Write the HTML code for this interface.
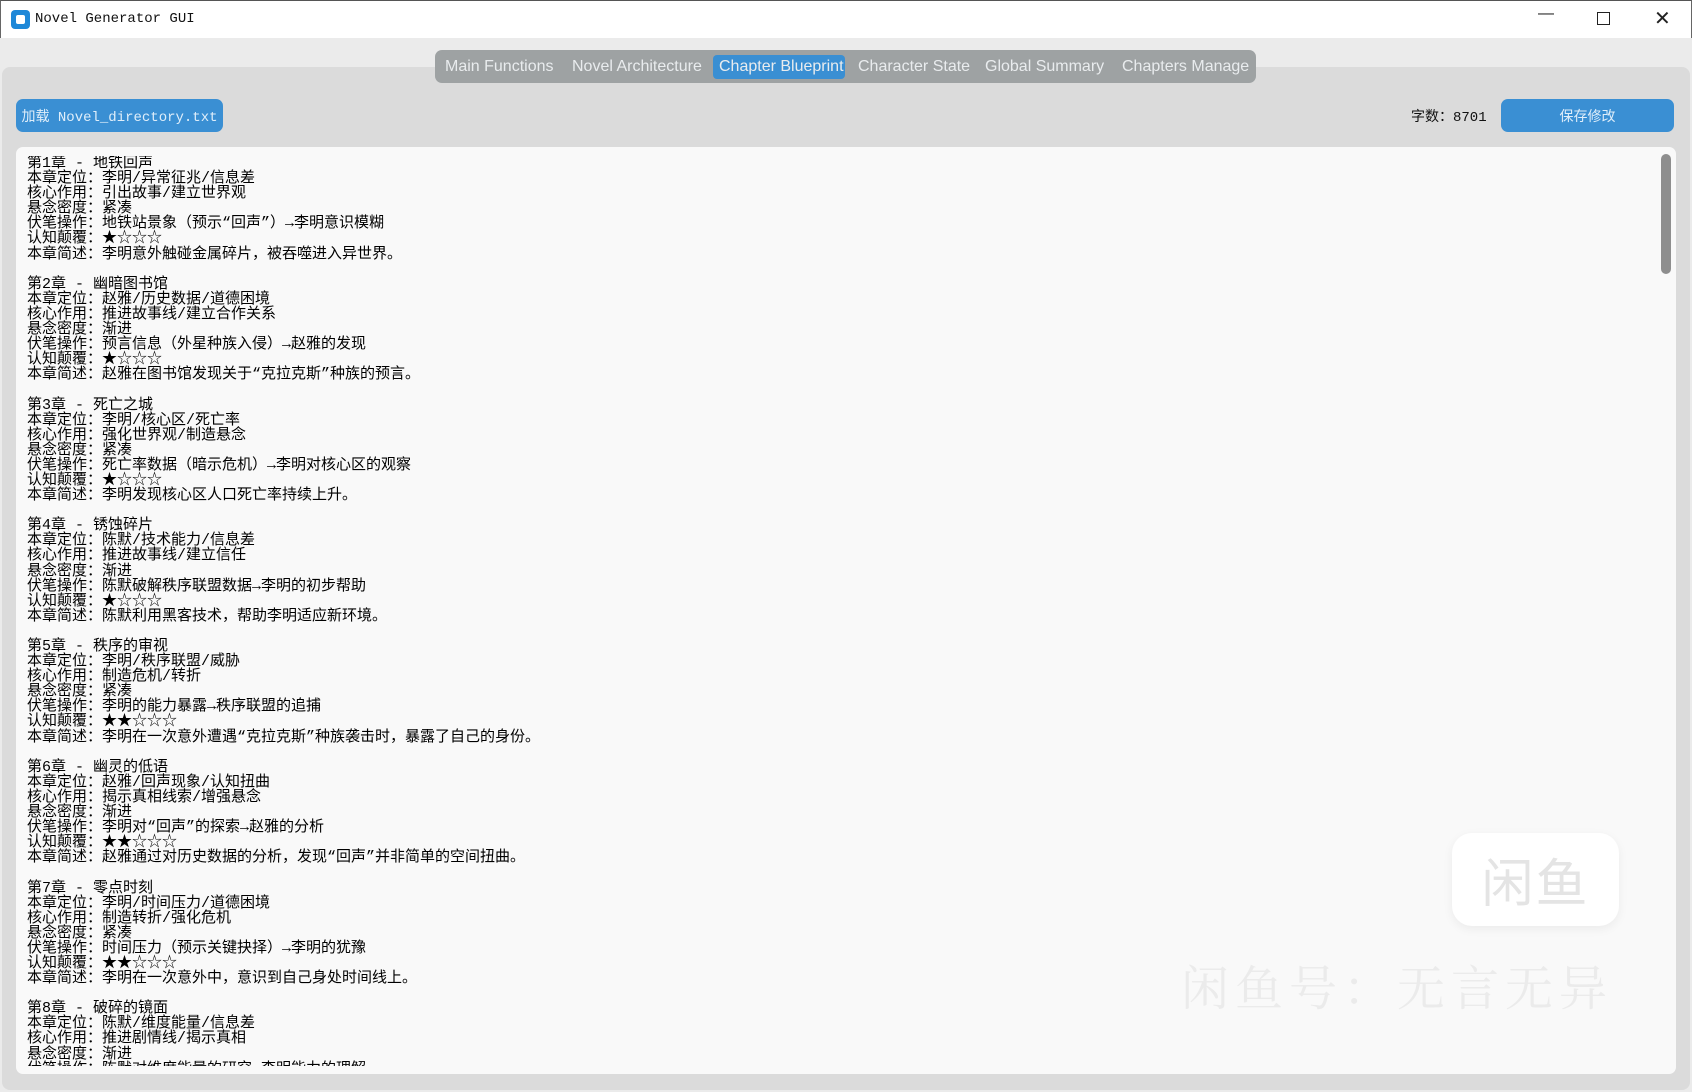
<!DOCTYPE html>
<html><head><meta charset="utf-8"><style>
*{margin:0;padding:0;box-sizing:border-box}
body{width:1692px;height:1092px;background:#ebebeb;position:relative;overflow:hidden;font-family:"Liberation Sans","Noto Sans CJK SC",sans-serif}
.title{position:absolute;left:0;top:0;width:1692px;height:38px;background:#fff;border-top:1px solid #555;border-left:1px solid #666;border-right:1px solid #666}
.title .ic{position:absolute;left:10px;top:9px;width:19px;height:19px;border-radius:4px;background:#1e88d8}
.title .ic::after{content:"";position:absolute;left:5px;top:5px;width:9px;height:9px;background:#fff;border-radius:2px}
.title .t{position:absolute;left:34px;top:10px;font:14px "Liberation Mono",monospace;color:#111}
.ctl{position:absolute;top:8px;font-size:16px;color:#222}
.panel{position:absolute;left:2px;top:67px;width:1688px;height:1023px;background:#dbdbdb;border-radius:8px}
.tabs{position:absolute;left:435px;top:50px;width:821px;height:33px;background:#9ea2a3;border-radius:7px}
.tab{position:absolute;font-size:16px;color:#e9ecee;white-space:nowrap}
.sel{position:absolute;left:713px;top:55px;width:132px;height:24px;background:#3a8fd3;border-radius:4px}
.btn{position:absolute;background:#3a8fd3;border-radius:7px;color:#dfeefa;font:14px "Liberation Mono","Noto Sans CJK SC",monospace;display:flex;align-items:center;justify-content:center}
.cnt{position:absolute;left:1411px;top:106px;font:14px "Liberation Mono","Noto Sans CJK SC",monospace;color:#111}
.box{position:absolute;left:16px;top:147px;width:1660px;height:927px;background:#f9f9f9;border-radius:7px;overflow:hidden}
.txt{position:absolute;left:11px;top:9px;width:1500px;height:910px;overflow:hidden;font:15px/15.1px "Liberation Mono","Noto Sans CJK SC",monospace;color:#000;white-space:pre}
.sb{position:absolute;left:1661px;top:154px;width:10px;height:120px;background:#8e8e8e;border-radius:5px}
.logo{position:absolute;left:1452px;top:833px;width:167px;height:93px;background:#fff;border-radius:20px;box-shadow:0 3px 10px rgba(0,0,0,0.06);font:52px "Noto Sans CJK SC",sans-serif;color:#e4e4e4;display:flex;align-items:center;justify-content:center;letter-spacing:2px}
.wm{position:absolute;left:1181px;top:950px;font:48px "Noto Serif CJK SC",serif;color:#ebebeb;white-space:nowrap;letter-spacing:6px}
</style></head><body>
<div class="title"><div class="ic"></div><div class="t">Novel Generator GUI</div>
<div class="ctl" style="left:1537px;top:4px">&#8212;</div>
<div class="ctl" style="left:1596px;top:11px;width:13px;height:13px;border:1.5px solid #222"></div>
<div class="ctl" style="left:1653px;top:5px;font-size:20px">&#10005;</div></div>
<div class="panel"></div>
<div class="tabs"></div>
<div class="sel"></div>
<div class="tab" style="left:445px;top:58px">Main Functions</div>
<div class="tab" style="left:572px;top:58px">Novel Architecture</div>
<div class="tab" style="left:719px;top:58px">Chapter Blueprint</div>
<div class="tab" style="left:858px;top:58px">Character State</div>
<div class="tab" style="left:985px;top:58px">Global Summary</div>
<div class="tab" style="left:1122px;top:58px">Chapters Manage</div>
<div class="btn" style="left:16px;top:99px;width:207px;height:33px">加载 Novel_directory.txt</div>
<div class="cnt">字数：8701</div>
<div class="btn" style="left:1501px;top:99px;width:173px;height:33px">保存修改</div>
<div class="box"><div class="txt">第1章 - 地铁回声
本章定位：李明/异常征兆/信息差
核心作用：引出故事/建立世界观
悬念密度：紧凑
伏笔操作：地铁站景象（预示“回声”）→李明意识模糊
认知颠覆：★☆☆☆
本章简述：李明意外触碰金属碎片，被吞噬进入异世界。

第2章 - 幽暗图书馆
本章定位：赵雅/历史数据/道德困境
核心作用：推进故事线/建立合作关系
悬念密度：渐进
伏笔操作：预言信息（外星种族入侵）→赵雅的发现
认知颠覆：★☆☆☆
本章简述：赵雅在图书馆发现关于“克拉克斯”种族的预言。

第3章 - 死亡之城
本章定位：李明/核心区/死亡率
核心作用：强化世界观/制造悬念
悬念密度：紧凑
伏笔操作：死亡率数据（暗示危机）→李明对核心区的观察
认知颠覆：★☆☆☆
本章简述：李明发现核心区人口死亡率持续上升。

第4章 - 锈蚀碎片
本章定位：陈默/技术能力/信息差
核心作用：推进故事线/建立信任
悬念密度：渐进
伏笔操作：陈默破解秩序联盟数据→李明的初步帮助
认知颠覆：★☆☆☆
本章简述：陈默利用黑客技术，帮助李明适应新环境。

第5章 - 秩序的审视
本章定位：李明/秩序联盟/威胁
核心作用：制造危机/转折
悬念密度：紧凑
伏笔操作：李明的能力暴露→秩序联盟的追捕
认知颠覆：★★☆☆☆
本章简述：李明在一次意外遭遇“克拉克斯”种族袭击时，暴露了自己的身份。

第6章 - 幽灵的低语
本章定位：赵雅/回声现象/认知扭曲
核心作用：揭示真相线索/增强悬念
悬念密度：渐进
伏笔操作：李明对“回声”的探索→赵雅的分析
认知颠覆：★★☆☆☆
本章简述：赵雅通过对历史数据的分析，发现“回声”并非简单的空间扭曲。

第7章 - 零点时刻
本章定位：李明/时间压力/道德困境
核心作用：制造转折/强化危机
悬念密度：紧凑
伏笔操作：时间压力（预示关键抉择）→李明的犹豫
认知颠覆：★★☆☆☆
本章简述：李明在一次意外中，意识到自己身处时间线上。

第8章 - 破碎的镜面
本章定位：陈默/维度能量/信息差
核心作用：推进剧情线/揭示真相
悬念密度：渐进
伏笔操作：陈默对维度能量的研究→李明能力的理解
认知颠覆：★★☆☆☆</div>
</div>
<div class="sb"></div>
<div class="logo">闲鱼</div>
<div class="wm">闲鱼号：无言无异</div>
</body></html>
